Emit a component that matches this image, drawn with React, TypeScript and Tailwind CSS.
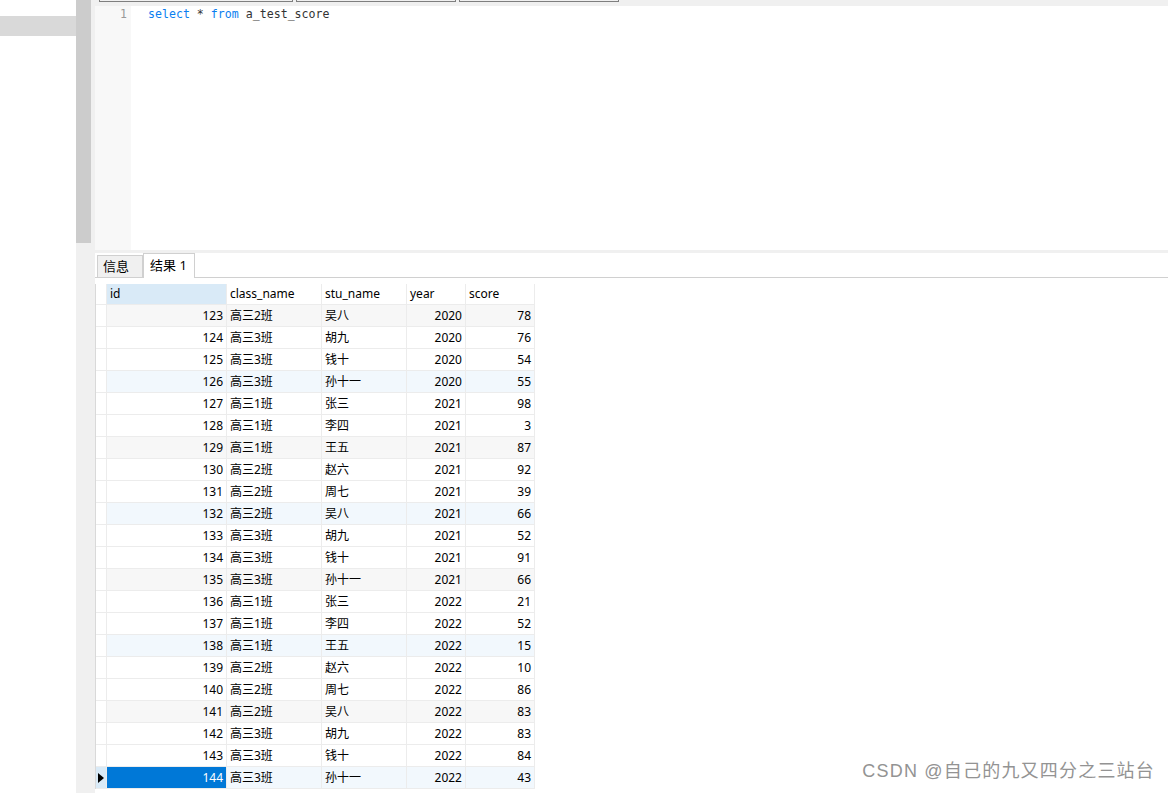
import React from 'react';

const rows: [number, string, string, number, number][] = [
  [123, '高三2班', '吴八', 2020, 78],
  [124, '高三3班', '胡九', 2020, 76],
  [125, '高三3班', '钱十', 2020, 54],
  [126, '高三3班', '孙十一', 2020, 55],
  [127, '高三1班', '张三', 2021, 98],
  [128, '高三1班', '李四', 2021, 3],
  [129, '高三1班', '王五', 2021, 87],
  [130, '高三2班', '赵六', 2021, 92],
  [131, '高三2班', '周七', 2021, 39],
  [132, '高三2班', '吴八', 2021, 66],
  [133, '高三3班', '胡九', 2021, 52],
  [134, '高三3班', '钱十', 2021, 91],
  [135, '高三3班', '孙十一', 2021, 66],
  [136, '高三1班', '张三', 2022, 21],
  [137, '高三1班', '李四', 2022, 52],
  [138, '高三1班', '王五', 2022, 15],
  [139, '高三2班', '赵六', 2022, 10],
  [140, '高三2班', '周七', 2022, 86],
  [141, '高三2班', '吴八', 2022, 83],
  [142, '高三3班', '胡九', 2022, 83],
  [143, '高三3班', '钱十', 2022, 84],
  [144, '高三3班', '孙十一', 2022, 43],
];

const cell = 'h-full border-r border-[#ececec] flex items-center px-[3px] whitespace-nowrap';

export default function App() {
  return (
    <div className="relative flex w-[1168px] h-[793px] overflow-hidden bg-white font-['Noto_Sans','Noto_Sans_CJK_SC',sans-serif] text-[12px] text-black">
      {/* left object panel */}
      <aside className="w-[76px] shrink-0">
        <div className="h-[16px]" />
        <div className="h-[20px] bg-[#d9d9d9]" />
      </aside>

      {/* splitter / scrollbar */}
      <div className="w-[15px] shrink-0 flex flex-col">
        <div className="h-[243px] bg-[#cccccc]" />
        <div className="flex-1 bg-[#f0f0f0]" />
      </div>

      <main className="flex-1 flex flex-col min-w-0">
        {/* query tab strip */}
        <div className="h-[6px] bg-[#f0f0f0] flex items-start pl-[8px] gap-[3px]">
          <div className="w-[194px] h-[2px] border-x border-b border-[#7f7f7f]" />
          <div className="w-[160px] h-[2px] border-x border-b border-[#7f7f7f]" />
          <div className="w-[160px] h-[2px] border-x border-b border-[#7f7f7f]" />
        </div>

        {/* editor */}
        <div className="h-[244px] flex">
          <div className="w-[4px] bg-[#f0f0f0]" />
          <div className="w-[36px] bg-[#f8f8f8] pr-[4px] text-right font-['DejaVu_Sans_Mono',monospace] text-[11.5px] leading-[16px] text-[#999999]">
            1
          </div>
          <div className="flex-1 pl-[17px] font-['DejaVu_Sans_Mono',monospace] text-[11.6px] leading-[16px] text-[#333333] whitespace-pre">
            <span className="text-[#0a7ef0]">select</span> * <span className="text-[#0a7ef0]">from</span> a_test_score
          </div>
        </div>

        <div className="h-[3px] bg-[#f0f0f0]" />

        {/* results */}
        <div className="flex-1 flex">
          <div className="w-[4px] bg-[#f0f0f0]" />
          <div className="flex-1 flex flex-col">
            <div className="h-[25px] flex items-end pl-[2px] border-b border-[#d0d0d0]">
              <div className="h-[22px] w-[46px] bg-[#f0f0f0] border border-b-0 border-[#d0d0d0] pl-[5px] flex items-center text-[13px]">
                信息
              </div>
              <div className="h-[25px] w-[52px] bg-white border border-b-0 border-[#d0d0d0] -mb-px pl-[6px] flex items-center text-[13px]">
                结果 1
              </div>
            </div>

            <div className="mt-[6px] w-[440px] border-l border-[#d9d9d9]">
              {/* header */}
              <div className="h-[21px] flex border-b border-[#ececec]">
                <div className="w-[11px] h-full border-r border-[#ececec]" />
                <div className={`${cell} w-[120px] bg-[#d9eaf7] border-[#d0e2f2]`}>id</div>
                <div className={`${cell} w-[95px]`}>class_name</div>
                <div className={`${cell} w-[85px]`}>stu_name</div>
                <div className={`${cell} w-[59px]`}>year</div>
                <div className={`${cell} w-[69px]`}>score</div>
              </div>

              {rows.map((r, i) => {
                const last = i === rows.length - 1;
                const tint =
                  i % 3 !== 0 ? 'bg-white' : (i / 3) % 2 === 0 ? 'bg-[#f7f7f7]' : 'bg-[#f2f8fd]';
                return (
                  <div key={r[0]} className={`h-[22px] flex border-b border-[#ececec] ${tint}`}>
                    <div
                      className={`w-[11px] h-full border-r border-[#ececec] flex items-center justify-center ${
                        last ? 'bg-[#d9eaf7]' : 'bg-white'
                      }`}
                    >
                      {last && (
                        <svg width="6" height="10" viewBox="0 0 6 10">
                          <path d="M0 0 L6 5 L0 10 Z" fill="#000" />
                        </svg>
                      )}
                    </div>
                    <div
                      className={`${cell} w-[120px] justify-end ${last ? 'bg-[#0078d7] text-white' : ''}`}
                    >
                      {r[0]}
                    </div>
                    <div className={`${cell} w-[95px]`}>{r[1]}</div>
                    <div className={`${cell} w-[85px]`}>{r[2]}</div>
                    <div className={`${cell} w-[59px] justify-end`}>{r[3]}</div>
                    <div className={`${cell} w-[69px] justify-end`}>{r[4]}</div>
                  </div>
                );
              })}
            </div>
          </div>
        </div>
      </main>

      {/* watermark */}
      <div className="absolute right-[13px] bottom-[8px] text-[18px] tracking-[1.2px] text-[#939393] font-['Liberation_Sans','Noto_Sans_CJK_SC',sans-serif] [text-shadow:0_0_2px_#ffffff]">
        CSDN @自己的九又四分之三站台
      </div>
    </div>
  );
}
